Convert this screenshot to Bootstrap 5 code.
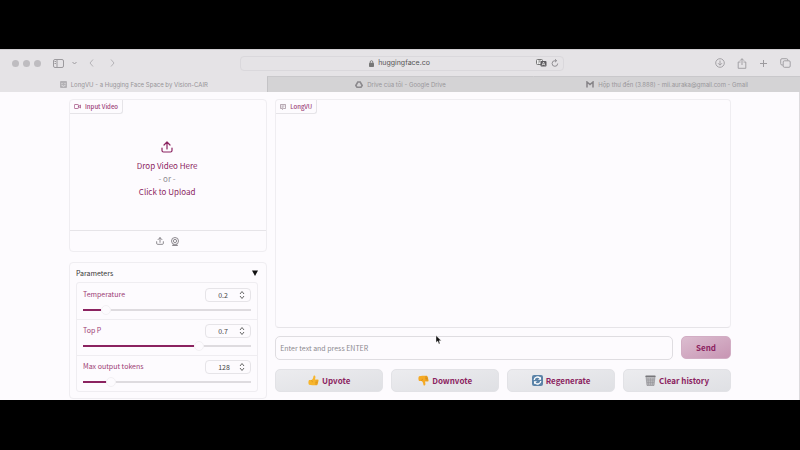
<!DOCTYPE html>
<html lang="en">
<head>
<meta charset="utf-8">
<meta name="viewport" content="width=device-width, initial-scale=1">
<title>LongVU - a Hugging Face Space by Vision-CAIR</title>
<link href="https://cdn.jsdelivr.net/npm/bootstrap@5.3.0/dist/css/bootstrap.min.css" rel="stylesheet">
<style>
:root { --plum: #8b2360; --line: #e6e4e8; --paper: #fdfbfe; }
body { background: #000; font-family: "Noto Sans CJK SC", "Noto Sans", sans-serif; font-size: 7px; line-height: 12px; color: #333; padding: 49px 0; }
svg { display: block; flex: none; }
.chrome { font-family: Inter, Roboto, sans-serif; color: #9c9a9e; background: #e5e3e6; border-top: 1px solid #d0ced1; }
.chrome button { border: 0; padding: 0; background: none; color: inherit; }
.toolbar { height: 26px; padding: 0 9px 0 8px; }
.side { flex: 1 1 0; }
.light { width: 7px; height: 7px; border-radius: 50%; background: #bebcc0; }
.address { width: 324px; height: 15px; border: 1px solid #dad8dc; border-radius: 4px; color: #555; font-size: 7px; }
.tabs a { flex: 1 1 0; height: 16px; font-size: 6px; color: #98969a; background: #d4d3d5; border-left: 1px solid #c4c3c6; border-top: 1px solid #c9c8cb; text-decoration: none; white-space: nowrap; }
.tabs a + a + a { border-left-color: transparent; background-clip: border-box; }
.tabs a.current { background: #e5e3e6; border-color: transparent; color: #959397; }
.page { background: var(--paper); padding: 7px 68px 1px 69px; gap: 8px; border-right: 1px solid #dddbde; }
.leftside { flex: 30 1 0; min-width: 0; }
.rightside { flex: 69 1 0; min-width: 0; }
.panel { border: 1px solid #efedf1; border-radius: 4px; }
.tag { height: 14px; font-size: 6px; color: #9c4279; padding: 0 4px; gap: 4px; border: 1px solid var(--line); border-width: 0 1px 1px 0; border-radius: 0 0 3px 0; font-weight: 500; }
.drop { border: 0; background: none; padding: 27px 2px 32px 0; color: var(--plum); font-size: 8px; line-height: 13px; }
.drop svg { margin-bottom: 6px; }
.drop .or { color: #918d94; }
.sources { height: 21px; border-top: 1px solid var(--line); gap: 7px; padding-right: 1px; color: #716d73; }
.sources button { border: 0; padding: 0; background: none; color: inherit; }
.params { margin-top: 10px; padding: 0 6px 6px; }
.params .title { height: 19px; border: 0; padding: 0 2px 0 0; background: none; font-size: 7px; color: #333; }
.fields { border: 1px solid #efedf1; border-radius: 3px; padding: 0 6px; margin: 0 2px 0 0; }
.field { height: 36px; padding-top: 5px; }
.field + .field { border-top: 1px solid #efedf1; margin: 0 -6px; padding: 4px 6px 0; }
.field label { color: #9c3a74; font-size: 7px; }
.num { width: 46px; height: 14px; border: 1px solid var(--line); border-radius: 4px; padding: 0 5px 0 12px; }
.num input { width: 20px; border: 0; padding: 0; background: none; font-size: 7px; line-height: 12px; height: 12px; color: #444; appearance: textfield; -moz-appearance: textfield; outline: 0; }
.num input::-webkit-inner-spin-button { appearance: none; -webkit-appearance: none; margin: 0; }
.slide { display: block; width: 100%; height: 10px; margin: 3px 0 0; appearance: none; -webkit-appearance: none; background: linear-gradient(to right, var(--plum) var(--fill), #dedbdf var(--fill)) center / 100% 2px no-repeat; }
.slide::-webkit-slider-thumb { -webkit-appearance: none; width: 10px; height: 10px; border-radius: 50%; background: var(--paper); border: 1px solid #f3f1f4; }
.chat { height: 229px; border-bottom-color: var(--line); }
.ask { height: 24px; border: 1px solid #dfdde1; border-radius: 5px; background: transparent; font-size: 7px; padding: 0 4px; min-width: 0; color: #333; }
.ask::placeholder { color: #8c8a8e; opacity: 1; }
.send, .act { height: 23px; padding: 0; border-radius: 5px; color: var(--plum); font-size: 8px; font-weight: 700; }
.send { width: 50px; border: 1px solid #d2adc4; background: linear-gradient(to bottom right, #dcbdd0, #c795b3); }
.act { flex: 1 1 0; border: 1px solid #e2e2e6; background: linear-gradient(to bottom right, #ececef, #dfe0e4); gap: 3px; white-space: nowrap; }
.actions { margin-top: 9px; }
.pointer { left: 435px; top: 335px; }
</style>
</head>
<body>
<svg width="0" height="0" class="position-absolute">
  <symbol id="upload" viewBox="0 0 24 24" fill="none" stroke="currentColor" stroke-width="2.400" stroke-linecap="round" stroke-linejoin="round"><path d="M2 14v5a3 3 0 0 0 3 3h14a3 3 0 0 0 3-3v-5M12 16V2M6 8l6-6 6 6"/></symbol>
  <symbol id="spin" viewBox="0 0 6 10" fill="none" stroke="#666" stroke-width="1"><path d="M1 4l2-2.500L5 4M1 6l2 2.500L5 6"/></symbol>
</svg>

<header class="chrome">
  <div class="toolbar d-flex align-items-center">
    <div class="side d-flex align-items-center ps-1">
      <span class="light"></span><span class="light ms-1"></span><span class="light ms-1"></span>
      <button class="ms-2 ps-1" aria-label="Sidebar"><svg width="11" height="9" viewBox="0 0 11 9" fill="none" stroke="currentColor"><rect x=".5" y=".5" width="10" height="8" rx="1.500"/><path d="M4 1v7M1.500 2.500h1.500M1.500 4.500h1.500"/></svg></button>
      <button class="ms-2" aria-label="Tab groups"><svg width="5" height="4" viewBox="0 0 5 4" fill="none" stroke="currentColor"><path d="M.5 1l2 2 2-2"/></svg></button>
      <button class="ms-2 ps-1" aria-label="Back"><svg width="5" height="8" viewBox="0 0 5 8" fill="none" stroke="#b5b3b7"><path d="M4 .5L1 4l3 3.500"/></svg></button>
      <button class="ms-3" aria-label="Forward"><svg width="5" height="8" viewBox="0 0 5 8" fill="none" stroke="#b5b3b7"><path d="M1 .5L4 4 1 7.500"/></svg></button>
    </div>
    <div class="address d-flex align-items-center">
      <span class="side"></span>
      <svg class="me-1" width="5" height="7" viewBox="0 0 5 7"><path d="M1.200 3V2a1.300 1.300 0 0 1 2.600 0v1" fill="none" stroke="#777" stroke-width=".9"/><rect y="2.800" width="5" height="4.200" rx=".8" fill="#777"/></svg>
      <span>huggingface.co</span>
      <span class="side d-flex justify-content-end align-items-center gap-1 pe-1">
        <button aria-label="Translate"><svg width="11" height="8" viewBox="0 0 11 8"><rect x=".5" y=".5" width="6" height="5" rx="1" fill="#eee" stroke="#777"/><path d="M2 2h3M3.500 1.500C3.500 3 3 4 2 4.500" stroke="#777" stroke-width=".6" fill="none"/><rect x="4.500" y="2" width="6" height="5.500" rx="1" fill="#5c5a5e"/><path d="M6 6.500L7.500 3 9 6.500M6.500 5.500h2" stroke="#eee" stroke-width=".7" fill="none"/></svg></button>
        <button aria-label="Reload"><svg width="8" height="8" viewBox="0 0 8 8" fill="none" stroke="#88868a" stroke-width=".9"><path d="M6.700 4.500A2.800 2.800 0 1 1 4 1.700h1.500M4 .2l1.600 1.500L4 3.200"/></svg></button>
      </span>
    </div>
    <div class="side d-flex align-items-center justify-content-end gap-2">
      <button class="me-1" aria-label="Downloads"><svg width="10" height="10" viewBox="0 0 10 10" fill="none" stroke="currentColor" stroke-width=".9"><circle cx="5" cy="5" r="4.300"/><path d="M5 2.500v4.500M3 5.200l2 2 2-2"/></svg></button>
      <button class="me-1" aria-label="Share"><svg width="10" height="11" viewBox="0 0 10 11" fill="none" stroke="currentColor" stroke-width=".9"><path d="M3.500 4H1.200v6.300h7.600V4H6.500M5 7V.8M3 2.700l2-2 2 2"/></svg></button>
      <button class="me-1" aria-label="New tab"><svg width="9" height="9" viewBox="0 0 9 9" stroke="currentColor"><path d="M4.500 1v7M1 4.500h7"/></svg></button>
      <button aria-label="All tabs"><svg width="11" height="10" viewBox="0 0 11 10" fill="none" stroke="currentColor" stroke-width=".9"><path d="M3 7H2A1.300 1.300 0 0 1 .7 5.700V2A1.300 1.300 0 0 1 2 .7h4.500A1.300 1.300 0 0 1 7.800 2v.7"/><rect x="3.200" y="2.800" width="7" height="6.500" rx="1.200"/></svg></button>
    </div>
  </div>
  <nav class="tabs d-flex" aria-label="Tabs">
    <a href="#" class="current d-flex align-items-center justify-content-center gap-1"><svg width="7" height="7" viewBox="0 0 7 7"><rect width="7" height="7" rx="1" fill="#b3b1b5"/><path d="M1.500 2.500h1M4.500 2.500h1M1.500 4.200q2 2.200 4 0" stroke="#e8e6e9" stroke-width=".8" fill="none"/></svg>LongVU - a Hugging Face Space by Vision-CAIR</a>
    <a href="#" class="d-flex align-items-center justify-content-center gap-1"><svg width="8" height="7" viewBox="0 0 8 7" fill="none" stroke="#8b898d" stroke-width="1.600"><path d="M2.800 1h2.400L7.200 4.500 6 6.200H2L.8 4.500z"/></svg>Drive của tôi - Google Drive</a>
    <a href="#" class="d-flex align-items-center justify-content-center gap-1"><svg width="8" height="7" viewBox="0 0 8 7" fill="none" stroke="#858387" stroke-width="1.500"><path d="M1 6.500V1l3 2.500L7 1v5.500"/></svg>Hộp thư đến (3.888) - mii.auraka@gmail.com - Gmail</a>
  </nav>
</header>

<main class="page d-flex">
  <section class="leftside">
    <div class="panel">
      <div class="d-flex"><span class="tag d-flex align-items-center"><svg width="7" height="5" viewBox="0 0 7 5" fill="none" stroke="currentColor" stroke-width=".7"><rect x=".4" y=".5" width="4" height="4" rx=".6"/><path d="M4.500 2.500l2-1.500v3z"/></svg>Input Video</span></div>
      <button class="drop d-flex flex-column align-items-center w-100">
        <svg width="12" height="12"><use href="#upload"/></svg>
        <span>Drop Video Here</span><span class="or">- or -</span><span>Click to Upload</span>
      </button>
      <div class="sources d-flex align-items-center justify-content-center">
        <button aria-label="Upload file"><svg width="8" height="8"><use href="#upload"/></svg></button>
        <button aria-label="Webcam"><svg width="8" height="9" viewBox="0 0 8 9" fill="none" stroke="currentColor" stroke-width=".8"><circle cx="4" cy="4" r="3.500"/><circle cx="4" cy="4" r="1.600"/><path d="M2.500 7.200L1.500 8.500h5L5.500 7.200"/></svg></button>
      </div>
    </div>
    <div class="panel params">
      <button class="title w-100 d-flex align-items-center justify-content-between"><span>Parameters</span><svg width="6" height="6" viewBox="0 0 6 6"><path d="M0 .5h6L3 6z" fill="#111"/></svg></button>
      <div class="fields">
        <div class="field">
          <div class="d-flex justify-content-between"><label for="temp">Temperature</label><span class="num d-flex align-items-center justify-content-between"><input type="number" value="0.2" step="0.1" aria-label="Temperature value"><svg width="6" height="10"><use href="#spin"/></svg></span></div>
          <input class="slide" id="temp" type="range" min="0.1" max="1" step="0.1" value="0.2" style="--fill:11%">
        </div>
        <div class="field">
          <div class="d-flex justify-content-between"><label for="topp">Top P</label><span class="num d-flex align-items-center justify-content-between"><input type="number" value="0.7" step="0.1" aria-label="Top P value"><svg width="6" height="10"><use href="#spin"/></svg></span></div>
          <input class="slide" id="topp" type="range" min="0" max="1" step="0.1" value="0.7" style="--fill:66%">
        </div>
        <div class="field">
          <div class="d-flex justify-content-between"><label for="maxt">Max output tokens</label><span class="num d-flex align-items-center justify-content-between"><input type="number" value="128" aria-label="Max output tokens value"><svg width="6" height="10"><use href="#spin"/></svg></span></div>
          <input class="slide" id="maxt" type="range" min="64" max="512" step="64" value="128" style="--fill:14%">
        </div>
      </div>
    </div>
  </section>

  <section class="rightside">
    <div class="panel chat"><div class="d-flex"><span class="tag d-flex align-items-center"><svg width="6" height="6" viewBox="0 0 6 6" fill="none" stroke="#9a8794" stroke-width=".7"><path d="M.5.5h5v4H3.500L2.500 5.500V4.500h-2zM1.500 2h3M1.500 3.200h2"/></svg>LongVU</span></div></div>
    <form class="d-flex gap-2 mt-2">
      <input class="ask flex-grow-1" type="text" placeholder="Enter text and press ENTER" aria-label="Message">
      <button class="send" type="button">Send</button>
    </form>
    <div class="actions d-flex gap-2">
      <button class="act d-flex align-items-center justify-content-center"><svg width="11" height="11" viewBox="0 0 11 11"><path d="M1 5h2.500C5 4 5.300 2.500 5.500 1c.2-1 1.800-.7 1.900.7C7.500 3 7 4 7 4.500h2.800c1.200 0 1.200 1.600.2 1.600.8.3.6 1.500-.2 1.500.6.400.4 1.400-.4 1.400.3.700-.2 1.300-1 1.300H4.500L1 9.800C.2 8.500.2 6.500 1 5z" fill="#f7b52c"/><path d="M7.500 6.100H10M7.300 7.600h2.500M7.200 9h2.200M3.500 5.200c.8 1 .8 1.500.8 2" stroke="#c47a16" stroke-width=".5" fill="none"/></svg>Upvote</button>
      <button class="act d-flex align-items-center justify-content-center"><svg width="11" height="11" viewBox="0 0 11 11"><g transform="translate(0 11) scale(1 -1)"><path d="M1 5h2.500C5 4 5.300 2.500 5.500 1c.2-1 1.800-.7 1.900.7C7.500 3 7 4 7 4.500h2.800c1.200 0 1.200 1.600.2 1.600.8.3.6 1.500-.2 1.500.6.400.4 1.400-.4 1.400.3.700-.2 1.300-1 1.300H4.500L1 9.800C.2 8.500.2 6.500 1 5z" fill="#f5aa25"/><path d="M7.500 6.100H10M7.300 7.600h2.500M7.200 9h2.200M3.500 5.200c.8 1 .8 1.500.8 2" stroke="#b46f14" stroke-width=".5" fill="none"/></g></svg>Downvote</button>
      <button class="act d-flex align-items-center justify-content-center"><svg width="11" height="11" viewBox="0 0 11 11"><rect width="11" height="11" rx="2" fill="#5b83a8"/><path d="M2.200 5A3.300 3.300 0 0 1 8 3.200M8.800 6A3.300 3.300 0 0 1 3 7.800" stroke="#fff" stroke-width="1.300" fill="none"/><path d="M9 1.800v3H6zM2 9.200v-3h3z" fill="#fff"/></svg>Regenerate</button>
      <button class="act d-flex align-items-center justify-content-center"><svg width="11" height="11" viewBox="0 0 11 11"><path d="M1 1.500h9l-1 9H2z" fill="#b7b7ba" stroke="#88878b" stroke-width=".6"/><path d="M3 3l.6 7M5.500 3v7M8 3l-.6 7M1.800 5h7.400M2 7.500h7" stroke="#929196" stroke-width=".5"/><rect x=".4" y=".4" width="10.200" height="1.700" rx=".7" fill="#77767a"/></svg>Clear history</button>
    </div>
  </section>
</main>
<svg class="pointer position-absolute" width="7" height="10" viewBox="0 0 7 10"><path d="M1 .5v7l1.700-1.400L3.900 9l1.200-.5L4 5.700h2.300z" fill="#111" stroke="#fff" stroke-width=".4"/></svg>
<script src="https://cdn.jsdelivr.net/npm/bootstrap@5.3.0/dist/js/bootstrap.bundle.min.js"></script>
</body>
</html>
